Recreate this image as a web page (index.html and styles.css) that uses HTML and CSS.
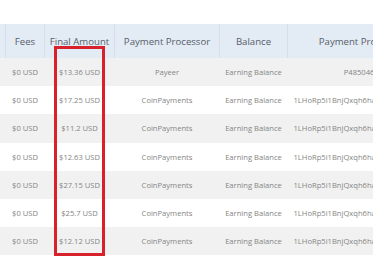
FILE: index.html
```html
<!DOCTYPE html>
<html>
<head>
<meta charset="utf-8">
<link rel="stylesheet" href="styles.css">
</head>
<body>
<div class="page">
  <div class="wrap">
    <table class="tbl">
      <thead>
        <tr>
          <th class="c0"></th>
          <th class="c-fees">Fees</th>
          <th class="c-final">Final Amount</th>
          <th class="c-proc">Payment Processor</th>
          <th class="c-bal">Balance</th>
          <th class="c-acc">Payment Processor ID</th>
        </tr>
      </thead>
      <tbody>
        <tr><td class="c0"></td><td>$0 USD</td><td>$13.36 USD</td><td>Payeer</td><td>Earning Balance</td><td>P4850462173</td></tr>
        <tr><td class="c0"></td><td>$0 USD</td><td>$17.25 USD</td><td>CoinPayments</td><td>Earning Balance</td><td class="addr">1LHoRp5i1BnjQxqh6haWzT3vK8mLpD2yF</td></tr>
        <tr><td class="c0"></td><td>$0 USD</td><td>$11.2 USD</td><td>CoinPayments</td><td>Earning Balance</td><td class="addr">1LHoRp5i1BnjQxqh6haWzT3vK8mLpD2yF</td></tr>
        <tr><td class="c0"></td><td>$0 USD</td><td>$12.63 USD</td><td>CoinPayments</td><td>Earning Balance</td><td class="addr">1LHoRp5i1BnjQxqh6haWzT3vK8mLpD2yF</td></tr>
        <tr><td class="c0"></td><td>$0 USD</td><td>$27.15 USD</td><td>CoinPayments</td><td>Earning Balance</td><td class="addr">1LHoRp5i1BnjQxqh6haWzT3vK8mLpD2yF</td></tr>
        <tr><td class="c0"></td><td>$0 USD</td><td>$25.7 USD</td><td>CoinPayments</td><td>Earning Balance</td><td class="addr">1LHoRp5i1BnjQxqh6haWzT3vK8mLpD2yF</td></tr>
        <tr><td class="c0"></td><td>$0 USD</td><td>$12.12 USD</td><td>CoinPayments</td><td>Earning Balance</td><td class="addr">1LHoRp5i1BnjQxqh6haWzT3vK8mLpD2yF</td></tr>
      </tbody>
    </table>
    <div class="highlight"></div>
  </div>
</div>
</body>
</html>
```
FILE: styles.css
```css
html, body {
  margin: 0;
  padding: 0;
  background: #ffffff;
  overflow: hidden;
}
.page {
  width: 100%;
  height: 270px;
  overflow: hidden;
  padding-top: 24px;
  box-sizing: border-box;
}
.wrap {
  position: relative;
  width: 600px;
}
.tbl {
  border-collapse: collapse;
  table-layout: fixed;
  font-family: "Open Sans", sans-serif;
  width: 443px;
}
.tbl th {
  background: #e3ebf5;
  color: #56606a;
  font-weight: 400;
  font-size: 9.6px;
  height: 34px;
  padding: 0;
  text-align: center;
  white-space: nowrap;
  border-left: 1px solid #d5dfeb;
  overflow: hidden;
}
.tbl th.c0 { border-left: none; }
.tbl td {
  font-size: 7.6px;
  color: #858585;
  height: 28.2px;
  padding: 0;
  text-align: center;
  white-space: nowrap;
  overflow: hidden;
}
.tbl tbody tr:nth-child(odd) td { background: #f1f1f1; }
.tbl tbody tr:nth-child(even) td { background: #ffffff; }
.c0 { width: 5px; }
.c-fees { width: 38px; }
.c-final { width: 69px; }
.c-proc { width: 104px; }
.c-bal { width: 67px; }
.c-acc { width: 160px; }
.tbl td.addr {
  text-align: left;
  padding-left: 6px;
}
.highlight {
  position: absolute;
  left: 54px;
  top: 22px;
  width: 45px;
  height: 204px;
  border: 3px solid #d8222b;
}
```
